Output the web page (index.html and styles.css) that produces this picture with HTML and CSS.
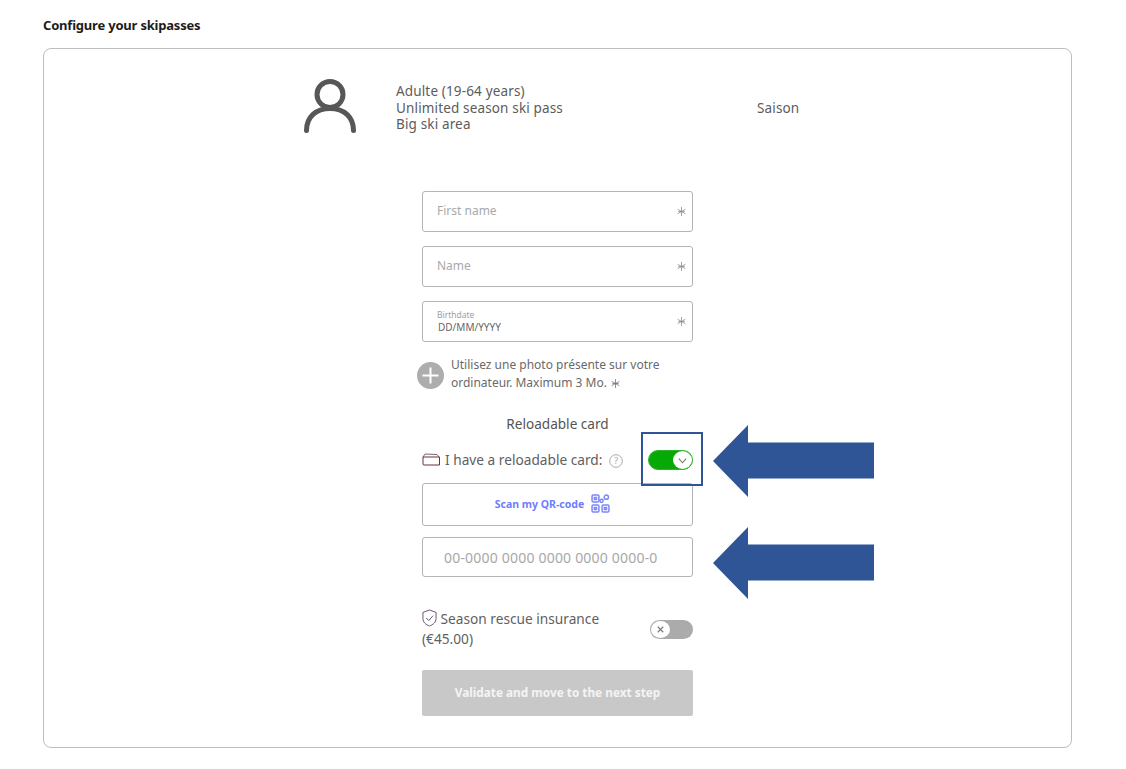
FILE: index.html
```html
<!DOCTYPE html>
<html lang="en">
<head>
<meta charset="utf-8">
<title>Configure your skipasses</title>
<link rel="stylesheet" href="styles.css">
</head>
<body>
<svg class="defs" aria-hidden="true"><defs><symbol id="star" viewBox="0 0 10 10"><path d="M5 0V10M0.700 2.500L9.300 7.500M9.300 2.500L0.700 7.500M1.500 5H8.500" /></symbol></defs></svg>
<main class="page">
  <h1 class="title">Configure your skipasses</h1>
  <section class="card">
    <div class="pass">
      <svg class="user-icon" viewBox="0 0 52 54" aria-hidden="true"><circle cx="26" cy="15.500" r="13" /><path d="M2.500 51.500 C2.500 38 12 29.500 26 29.500 C40 29.500 49.500 38 49.500 51.500" /></svg>
      <div class="pass-text">
        <div>Adulte (19-64 years)</div>
        <div>Unlimited season ski pass</div>
        <div>Big ski area</div>
      </div>
      <div class="pass-type">Saison</div>
    </div>
    <form class="form">
      <div class="field"><span class="placeholder">First name</span><svg class="star"><use href="#star" /></svg></div>
      <div class="field"><span class="placeholder">Name</span><svg class="star"><use href="#star" /></svg></div>
      <div class="field field-date">
        <div class="date-text"><span class="date-label">Birthdate</span><span class="date-value">DD/MM/YYYY</span></div>
        <svg class="star"><use href="#star" /></svg>
      </div>
      <div class="photo">
        <svg class="plus" viewBox="0 0 27 27" aria-hidden="true"><circle cx="13.500" cy="13.500" r="13.500" /><path d="M13.500 5.500V21.500M5.500 13.500H21.500" /></svg>
        <p class="photo-text">Utilisez une photo présente sur votre ordinateur. Maximum 3 Mo. <svg class="star star-inline"><use href="#star" /></svg></p>
      </div>
      <div class="section-title">Reloadable card</div>
      <div class="reload-row">
        <div class="reload-label">
          <svg class="card-icon" viewBox="0 0 19 13" aria-hidden="true"><path class="c1" d="M1 4 L3 1 L15 1.500 L17 4" /><path class="c2" d="M1 4 H17.500 V12 H2 Q1 12 1 11 Z" /></svg>
          <span>I have a reloadable card:</span>
          <svg class="help" viewBox="0 0 14 14" aria-hidden="true"><circle cx="7" cy="7" r="6.300" /><text x="7" y="10.300" text-anchor="middle">?</text></svg>
        </div>
        <div class="toggle toggle-on"><span class="knob"><svg viewBox="0 0 12 12" aria-hidden="true"><path d="M2 4 L6 8.500 L10 4" /></svg></span></div>
      </div>
      <button type="button" class="scan">
        <span>Scan my QR-code</span>
        <svg class="qr" viewBox="0 0 18 18" aria-hidden="true"><rect x="1" y="1" width="6.500" height="6.500" rx="1" /><rect x="1" y="10.500" width="6.500" height="6.500" rx="1" /><rect x="10.500" y="10.500" width="6.500" height="6.500" rx="1" /><circle cx="14.500" cy="3" r="2" /><circle cx="10" cy="6.500" r="1.500" /><path d="M3.200 3.200h2v2h-2zM3.200 12.700h2v2h-2zM12.700 12.700h2v2h-2z" /></svg>
      </button>
      <div class="field field-card"><span class="placeholder-card">00-0000 0000 0000 0000 0000-0</span></div>
      <div class="insurance">
        <p class="insurance-text">
          <svg class="shield" viewBox="0 0 16 19" aria-hidden="true"><path class="s1" d="M8 1 L15 3.500 V10 C15 14 12 16.500 8 18 C4 16.500 1 14 1 10 V3.500 Z" /><path class="s2" d="M4.500 9.500 L7.200 12.200 L11.800 7" /></svg>
          Season rescue insurance (€45.00)
        </p>
        <div class="toggle toggle-off"><span class="knob"><svg viewBox="0 0 12 12" aria-hidden="true"><path d="M3 3 L9 9 M9 3 L3 9" /></svg></span></div>
      </div>
      <button type="button" class="submit">Validate and move to the next step</button>
    </form>
  </section>
</main>
<div class="highlight"></div>
<svg class="arrow arrow-one" viewBox="0 0 161 72" aria-hidden="true"><path d="M0 36 L35 0 V17.500 H161 V53.500 H35 V72 Z" /></svg>
<svg class="arrow arrow-two" viewBox="0 0 161 72" aria-hidden="true"><path d="M0 36 L35 0 V17.500 H161 V53.500 H35 V72 Z" /></svg>
</body>
</html>
```
FILE: styles.css
```css
* { box-sizing: border-box; }
html, body { margin: 0; padding: 0; background: #fff; }
body {
  position: relative;
  width: 1126px;
  height: 769px;
  overflow: hidden;
  font-family: "Noto Sans", "Open Sans", sans-serif;
  color: #5c5c5c;
}
.defs { position: absolute; width: 0; height: 0; }
.page { padding: 17px 54px 0 43px; }
.title {
  margin: 0 0 14px;
  height: 17px;
  font-size: 13px;
  line-height: 17px;
  font-weight: 700;
  color: #1c1c1c;
  letter-spacing: -0.2px;
}
.card {
  height: 700px;
  border: 1px solid #bdbdbd;
  border-radius: 8px;
  padding: 30px 0 0;
}
.pass { display: flex; align-items: center; height: 56px; padding-left: 260px; }
.user-icon { width: 52px; height: 54px; align-self: flex-start; fill: none; stroke: #575757; stroke-width: 5; stroke-linecap: round; flex: none; }
.pass-text { margin: 2px 0 0 40px; width: 361px; font-size: 13.500px; line-height: 16.500px; letter-spacing: 0.15px; }
.pass-type { margin-top: 2px; font-size: 13.500px; letter-spacing: 0.15px; }
.form { width: 271px; margin: 56px 0 0 378px; display: flex; flex-direction: column; }
.field {
  height: 41px;
  border: 1px solid #b4b4b4;
  border-radius: 3px;
  margin-bottom: 14px;
  padding: 0 6px 2px 14px;
  display: flex;
  align-items: center;
  justify-content: space-between;
}
.placeholder { font-size: 12px; color: #a9a9a9; }
.star { width: 9px; height: 9px; flex: none; fill: none; stroke: #8d8d8d; stroke-width: 0.900; margin-top: 2px; }
.date-text { display: flex; flex-direction: column; }
.date-label { font-size: 8.500px; line-height: 11px; color: #a0a0a0; margin-top: 2px; }
.date-value { font-size: 10px; line-height: 15px; color: #666; margin-left: 1px; }
.photo { display: flex; align-items: center; margin: 0 0 0 -5px; height: 36px; gap: 7px; }
.plus { width: 27px; height: 27px; flex: none; margin-top: 2px; }
.plus circle { fill: #adadad; }
.plus path { stroke: #fff; stroke-width: 2; fill: none; }
.photo-text { margin: 0; font-size: 12px; line-height: 18px; width: 240px; color: #6a6a6a; }
.star-inline { vertical-align: -1px; margin: 0 0 0 1px; stroke: #777; }
.section-title { margin-top: 23px; text-align: center; font-size: 13.600px; line-height: 18px; color: #555; }
.reload-row { display: flex; align-items: center; justify-content: space-between; margin-top: 16px; height: 22px; }
.reload-label { display: flex; align-items: center; font-size: 13.700px; gap: 4px; color: #5f5f5f; padding-bottom: 2px; }
.card-icon { width: 19px; height: 13px; fill: none; stroke-width: 1; }
.card-icon .c1 { stroke: #7a6a60; }
.card-icon .c2 { stroke: #6f2f3f; }
.help { width: 14px; height: 14px; margin-left: 3px; margin-top: 3px; fill: none; stroke: #aaa; stroke-width: 1; }
.help text { fill: #aaa; stroke: none; font-size: 9.500px; font-family: "Noto Sans", sans-serif; }
.toggle { height: 20px; border-radius: 10px; position: relative; flex: none; }
.toggle-on { width: 45px; background: #06a906; border: 1px solid #2eb52e; }
.toggle-off { width: 43px; height: 19px; background: #ababab; }
.knob {
  position: absolute;
  width: 19px;
  height: 18px;
  border-radius: 50%;
  background: #fff;
  top: 0;
  display: flex;
  align-items: center;
  justify-content: center;
}
.toggle-on .knob { right: 0; }
.toggle-off .knob { left: 1px; top: 1px; height: 17px; }
.knob svg { width: 11px; height: 11px; fill: none; stroke: #777; stroke-width: 1.200; }
.scan {
  height: 43px;
  margin-top: 12px;
  background: #fff;
  border: 1px solid #b4b4b4;
  border-radius: 3px;
  display: flex;
  align-items: center;
  justify-content: center;
  gap: 7px;
  font-family: inherit;
  font-size: 10.500px;
  font-weight: 700;
  color: #6f7dff;
  padding: 0 10px 2px 0;
}
.qr { width: 19px; height: 19px; fill: none; stroke: #7b87f5; stroke-width: 1.400; }
.field-card { height: 40px; margin: 11px 0 0; padding: 0 0 0 21px; }
.placeholder-card { font-size: 14px; color: #a8a8a8; letter-spacing: 0.2px; }
.insurance { display: flex; align-items: center; justify-content: space-between; margin-top: 32px; height: 40px; }
.insurance-text { margin: 0; width: 200px; font-size: 13.700px; line-height: 20px; color: #5f5f5f; }
.shield { width: 15px; height: 18px; vertical-align: -3px; fill: none; }
.shield .s1 { stroke: #6b4a6b; stroke-width: 1; }
.shield .s2 { stroke: #556; stroke-width: 1; }
.submit {
  height: 46px;
  margin-top: 21px;
  border: 0;
  border-radius: 2px;
  background: #c8c8c8;
  color: #f4f4f4;
  font-family: inherit;
  font-size: 11.800px;
  font-weight: 700;
  padding: 0 0 2px;
}
.highlight {
  position: absolute;
  left: 641px;
  top: 432px;
  width: 62px;
  height: 54px;
  border: 2px solid #2f5597;
}
.arrow { position: absolute; left: 713px; width: 161px; height: 72px; fill: #2f5597; }
.arrow-one { top: 425px; }
.arrow-two { top: 527px; }
```
